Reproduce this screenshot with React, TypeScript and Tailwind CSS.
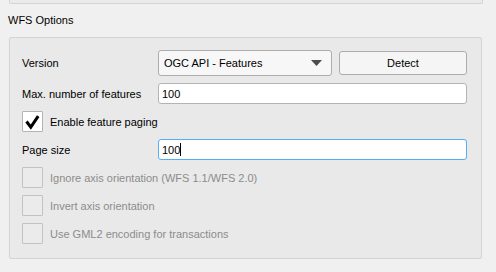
import React from 'react';

const CheckRow: React.FC<{ label: string; checked?: boolean; disabled?: boolean }> = ({ label, checked, disabled }) => (
  <div className="flex items-center h-[21px]">
    <div
      className={`w-[21px] h-[21px] border rounded-[1px] flex items-center justify-center ${
        disabled ? 'bg-[#ebebeb] border-[#c2c2c2]' : 'bg-white border-[#b4b4b4]'
      }`}
    >
      {checked && (
        <svg width="21" height="21" viewBox="0 0 21 21" className="-m-px">
          <path d="M4.5 10.5 L8.8 16.2 L16.2 5.2" fill="none" stroke="#000" strokeWidth="3" strokeLinejoin="miter" />
        </svg>
      )}
    </div>
    <span className={`ml-[7px] ${disabled ? 'text-[#8c8c8c]' : 'text-black'}`}>{label}</span>
  </div>
);

const App: React.FC = () => {
  return (
    <div className="w-[496px] h-[272px] bg-[#f0f0f0] overflow-hidden text-[11px] leading-[14px] text-black" style={{ fontFamily: '"Liberation Sans", Arial, sans-serif' }}>
      {/* bottom of the previous group */}
      <div className="ml-[9px] w-[474px] h-[4px] border border-t-0 border-[#d4d4d4] rounded-b-[2px] bg-[#eaeaea]"></div>

      <div className="pl-[8px] mt-[9px]">WFS Options</div>

      {/* Group box */}
      <div className="ml-[9px] mt-[10px] w-[473px] h-[222px] border border-[#d4d4d4] rounded-[2px] bg-[#e9e9e9] pl-[12px] pt-[12px] flex flex-col gap-[7px]">
        <div className="flex items-center h-[26px]">
          <span className="w-[136px]">Version</span>
          <div className="w-[174px] h-[26px] bg-[#f7f7f7] border border-[#adadad] rounded-[3px] flex items-center pl-[5px] pr-[9px] justify-between">
            <span>OGC API - Features</span>
            <svg width="11" height="6" viewBox="0 0 11 6">
              <path d="M0 0 H11 L5.5 6 Z" fill="#4d4d4d" />
            </svg>
          </div>
          <div className="ml-[7px] w-[128px] h-[24px] bg-[#f5f5f5] border border-[#adadad] rounded-[3px] flex items-center justify-center">
            Detect
          </div>
        </div>

        <div className="flex items-center h-[21px]">
          <span className="w-[136px]">Max. number of features</span>
          <div className="w-[309px] h-[21px] bg-white border border-[#b4b4b4] rounded-[3px] flex items-center pl-[3px]">100</div>
        </div>

        <CheckRow label="Enable feature paging" checked />

        <div className="flex items-center h-[21px]">
          <span className="w-[136px]">Page size</span>
          <div className="w-[309px] h-[21px] bg-white border border-[#55aef5] rounded-[3px] flex items-center pl-[3px]">
            100<span className="inline-block w-px h-[13px] bg-black"></span>
          </div>
        </div>

        <CheckRow label="Ignore axis orientation (WFS 1.1/WFS 2.0)" disabled />
        <CheckRow label="Invert axis orientation" disabled />
        <CheckRow label="Use GML2 encoding for transactions" disabled />
      </div>
    </div>
  );
};

export default App;
